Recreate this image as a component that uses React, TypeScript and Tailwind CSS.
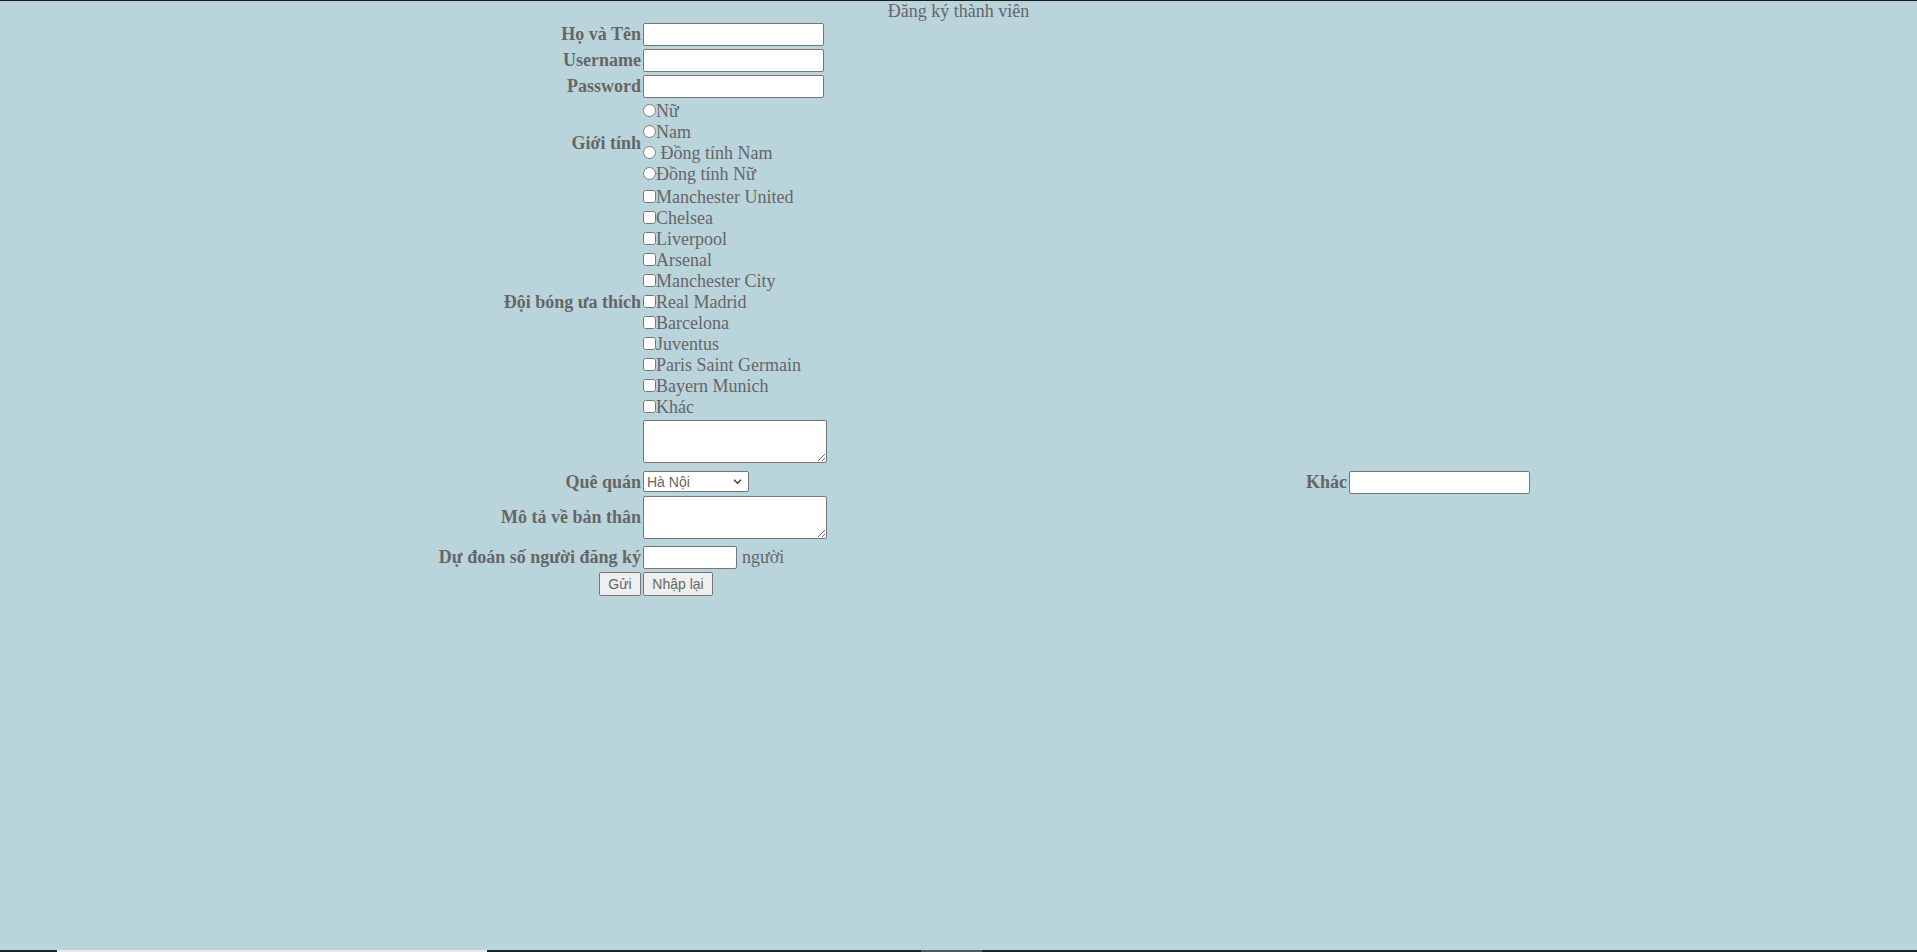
import React from 'react';

const genders = ['Nữ', 'Nam', ' Đồng tính Nam', 'Đồng tính Nữ'];

const teams = [
  'Manchester United',
  'Chelsea',
  'Liverpool',
  'Arsenal',
  'Manchester City',
  'Real Madrid',
  'Barcelona',
  'Juventus',
  'Paris Saint Germain',
  'Bayern Munich',
  'Khác',
];

const field =
  "border border-[#767676] rounded-[2px] bg-white px-[2px] text-[13.33px] text-[#666] font-['Liberation_Sans',Arial,sans-serif] outline-none";

function Row({ label, className, children }: { label?: string; className: string; children?: React.ReactNode }) {
  return (
    <div className={`flex items-center ${className}`}>
      <div className="w-[210px] shrink-0 text-right font-bold">{label}</div>
      <div className="ml-[2px] flex items-center">{children}</div>
    </div>
  );
}

export default function App() {
  return (
    <div className="flex h-screen flex-col border-t border-[#1c1c1c] bg-[#bad4db] font-['Liberation_Serif','Times_New_Roman',serif] text-[18px] leading-[21px] text-[#666]">
      <div className="text-center">Đăng ký thành viên</div>

      <form className="ml-[431px] flex flex-col" onSubmit={(e) => e.preventDefault()}>
        <Row label="Họ và Tên" className="mt-[1px]">
          <input type="text" className={`h-[23px] w-[181px] ${field}`} />
        </Row>
        <Row label="Username" className="mt-[3px]">
          <input type="text" className={`h-[23px] w-[181px] ${field}`} />
        </Row>
        <Row label="Password" className="mt-[3px]">
          <input type="password" className={`h-[23px] w-[181px] ${field}`} />
        </Row>

        {/* Giới tính */}
        <Row label="Giới tính" className="mt-[3px]">
          <div className="flex flex-col">
            {genders.map((g) => (
              <div key={g} className="h-[21px]">
                <input type="radio" name="gioitinh" className="m-0 h-[13px] w-[13px] align-baseline" />
                {g}
              </div>
            ))}
          </div>
        </Row>

        {/* Đội bóng */}
        <Row label="Đội bóng ưa thích" className="mt-[2px]">
          <div className="flex flex-col">
            {teams.map((t) => (
              <div key={t} className="h-[21px]">
                <input type="checkbox" className="m-0 h-[13px] w-[13px] align-baseline" />
                {t}
              </div>
            ))}
          </div>
        </Row>
        <Row className="mt-[2px]">
          <textarea className={`h-[43px] w-[184px] ${field}`} />
        </Row>

        {/* Quê quán + Khác */}
        <div className="mt-[8px] flex items-center">
          <div className="w-[210px] shrink-0 text-right font-bold">Quê quán</div>
          <div className="ml-[2px] w-[660px] shrink-0 self-start">
            <div className="relative w-[106px]">
              <select className={`h-[21px] w-[106px] appearance-none pl-[3px] text-[14px] ${field}`} defaultValue="hn">
                <option value="hn">Hà Nội</option>
                <option value="hcm">Hồ Chí Minh</option>
                <option value="dn">Đà Nẵng</option>
              </select>
              <svg
                className="pointer-events-none absolute right-[7px] top-[8px] h-[5px] w-[9px]"
                viewBox="0 0 9 5"
                fill="none"
                stroke="#3b3b3b"
                strokeWidth={1.5}
              >
                <path d="M1 0.8l3.5 3.4 3.5-3.4" />
              </svg>
            </div>
          </div>
          <div className="w-[44px] shrink-0 text-right font-bold">Khác</div>
          <input type="text" className={`ml-[2px] h-[23px] w-[181px] ${field}`} />
        </div>

        <Row label="Mô tả về bản thân" className="mt-[2px]">
          <textarea className={`h-[43px] w-[184px] ${field}`} />
        </Row>

        <Row label="Dự đoán số người đăng ký" className="mt-[7px]">
          <input type="text" className={`h-[23px] w-[94px] ${field}`} />
          <span className="ml-[5px]">người</span>
        </Row>

        <div className="mt-[3px] flex items-center">
          <div className="flex w-[210px] shrink-0 justify-end">
            <button
              type="submit"
              className="h-[24px] w-[42px] rounded-[2px] border border-[#767676] bg-[#efefef] text-[14px] text-[#666] font-['Liberation_Sans',Arial,sans-serif]"
            >
              Gửi
            </button>
          </div>
          <button
            type="reset"
            className="ml-[2px] h-[24px] w-[70px] rounded-[2px] border border-[#767676] bg-[#efefef] text-[14px] text-[#666] font-['Liberation_Sans',Arial,sans-serif]"
          >
            Nhập lại
          </button>
        </div>
      </form>

      <div className="flex-1" />

      {/* bottom strip */}
      <div className="flex h-[2px] bg-[#1d2427]">
        <div className="w-[57px]" />
        <div className="w-[430px] bg-[#e9e9e9]" />
        <div className="w-[434px]" />
        <div className="w-[61px] bg-[#50585b]" />
      </div>
    </div>
  );
}
